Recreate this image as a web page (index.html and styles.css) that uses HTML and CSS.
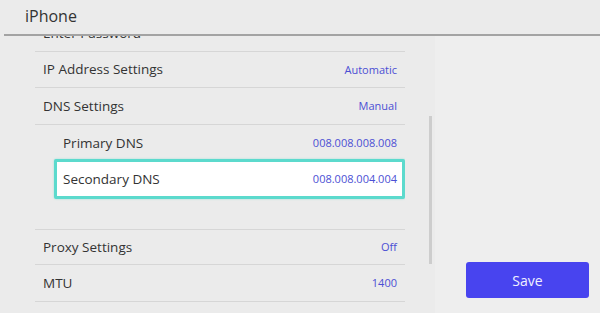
FILE: index.html
```html
<!DOCTYPE html>
<html>
<head>
<meta charset="utf-8">
<link rel="stylesheet" href="styles.css">
</head>
<body>
<div class="screen">
  <header class="header"><span class="title">iPhone</span></header>
  <div class="main">
    <div class="left">
      <div class="viewport">
        <ul class="list">
          <li class="row"><span class="label">Enter Password</span></li>
          <li class="row"><span class="label">IP Address Settings</span><span class="value">Automatic</span></li>
          <li class="row"><span class="label">DNS Settings</span><span class="value">Manual</span></li>
          <li class="sub"><span class="label">Primary DNS</span><span class="value">008.008.008.008</span></li>
          <li class="sub selected"><span class="label">Secondary DNS</span><span class="value">008.008.004.004</span></li>
          <li class="row top-line"><span class="label">Proxy Settings</span><span class="value">Off</span></li>
          <li class="row"><span class="label">MTU</span><span class="value">1400</span></li>
        </ul>
      </div>
      <div class="scrollbar"></div>
    </div>
    <div class="right">
      <button class="save">Save</button>
    </div>
  </div>
</div>
</body>
</html>
```

FILE: styles.css
```css
* { box-sizing: border-box; }
html, body { margin: 0; padding: 0; }
body {
  width: 600px;
  height: 313px;
  overflow: hidden;
  background: #ebebeb;
  font-family: "Open Sans", "Noto Sans", sans-serif;
  color: #333;
}
.screen { display: flex; flex-direction: column; height: 313px; }
.header {
  height: 36px;
  margin-left: 4px;
  border-bottom: 2px solid #a3a3a3;
  padding-left: 21px;
  display: flex;
  align-items: center;
  padding-bottom: 3px;
  position: relative;
  z-index: 2;
  background: #ebebeb;
}
.title { font-size: 16px; color: #333; }
.main { flex: 1; display: flex; min-height: 0; }
.left {
  width: 435px;
  display: flex;
  background: #ebebeb;
}
.viewport { width: 370px; margin-left: 35px; overflow: hidden; }
.list { list-style: none; margin: -21px 0 0; padding: 0; }
.row {
  height: 36.5px;
  display: flex;
  align-items: center;
  justify-content: space-between;
  padding: 0 8px;
  border-bottom: 1px solid #d6d6d6;
}
.row.top-line { border-top: 1px solid #d6d6d6; margin-top: 30px; }
.sub {
  height: 36px;
  display: flex;
  align-items: center;
  justify-content: space-between;
  padding: 0 8px 0 28px;
}
.sub.selected {
  margin-left: 19px;
  height: 40px;
  margin-top: -2px;
  background: #fff;
  border: 3px solid #5cdacd;
  border-radius: 2px;
  padding: 0 5px 0 6px;
  box-shadow: 0 0 2px rgba(92,218,205,0.6);
}
.label { font-size: 13.5px; color: #333; }
.value { font-size: 11px; color: #4c4fd4; }
.scrollbar {
  width: 3px;
  height: 148px;
  margin: 80px 0 0 24px;
  background: #cdcdcd;
}
.right {
  flex: 1;
  background: #eeeeee;
  display: flex;
  align-items: flex-end;
  justify-content: flex-end;
  padding: 0 11px 15px 0;
}
.save {
  width: 123px;
  height: 36px;
  background: #4844ef;
  border: none;
  border-radius: 3px;
  color: #f0f0ff;
  font-family: "Open Sans", "Noto Sans", sans-serif;
  font-size: 14px;
  padding: 0;
}
```
